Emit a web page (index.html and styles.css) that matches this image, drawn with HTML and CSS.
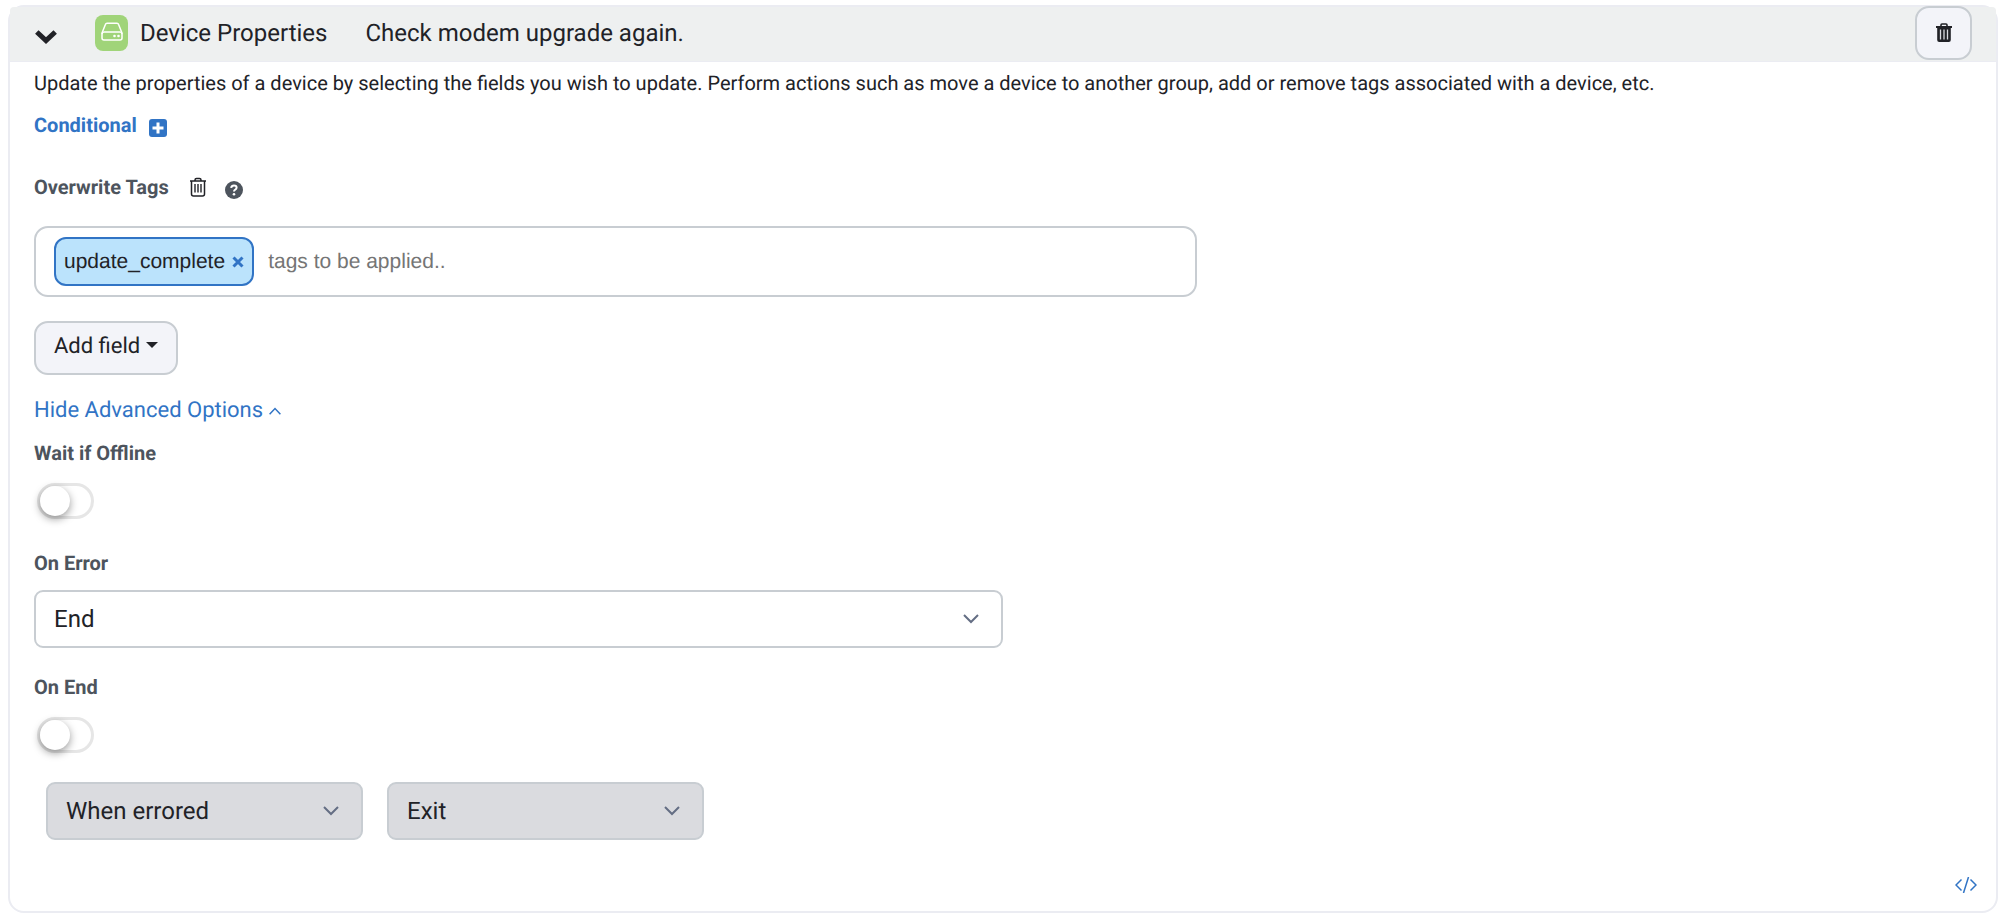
FILE: index.html
```html
<!DOCTYPE html>
<html lang="en">
<head>
<meta charset="utf-8">
<title>Device Properties</title>
<link rel="stylesheet" href="styles.css">
</head>
<body>
<main class="card">
  <header class="card-header">
    <button class="icon-button collapse" type="button" aria-label="Collapse">
      <svg width="24" height="18" viewBox="0 0 24 18"><path d="M2.800 4 12 12.600 21.200 4" fill="none" stroke="currentColor" stroke-width="5"/></svg>
    </button>
    <span class="device-icon">
      <svg width="22" height="20" viewBox="0 0 22 20" fill="none" stroke="#fff" stroke-width="1.500" stroke-linejoin="round"><path d="M1 11 4.500 2.300Q4.900 1.200 6 1.200H16Q17.100 1.200 17.500 2.300L21 11V16Q21 18 19 18H3Q1 18 1 16Z"/><path d="M1 12Q1.400 10 3 10H19Q20.600 10 21 12"/><circle cx="13.500" cy="14" r="1.300" fill="#fff" stroke="none"/><circle cx="17.500" cy="14" r="1.300" fill="#fff" stroke="none"/></svg>
    </span>
    <h1 class="title">Device Properties</h1>
    <span class="subtitle">Check modem upgrade again.</span>
    <button class="button delete" type="button" aria-label="Delete action">
      <svg width="18" height="20" viewBox="0 0 18 20"><path d="M6 3V2Q6 1 7 1H11Q12 1 12 2V3" fill="none" stroke="currentColor" stroke-width="1.600"/><path d="M1 3H17V5H15.800V17Q15.800 19 13.800 19H4.200Q2.200 19 2.200 17V5H1Z" fill="currentColor"/><path d="M5.500 6.500V16.500M9 6.500V16.500M12.500 6.500V16.500" stroke="#d9dadf" stroke-width="1.300"/></svg>
    </button>
  </header>
  <form class="card-body">
    <p class="description">Update the properties of a device by selecting the fields you wish to update. Perform actions such as move a device to another group, add or remove tags associated with a device, etc.</p>
    <button class="conditional" type="button">Conditional
      <svg width="18" height="18" viewBox="0 0 18 18"><rect width="18" height="18" rx="3" fill="currentColor"/><path d="M9 3.500V14.500M3.500 9H14.500" stroke="#fff" stroke-width="3"/></svg>
    </button>
    <div class="label-row">
      <label class="label" for="tags">Overwrite Tags</label>
      <button class="icon-button remove-field" type="button" aria-label="Remove field">
        <svg width="18" height="20" viewBox="0 0 18 20" fill="none" stroke="currentColor"><path d="M1 4H17M6 4V3Q6 1.500 7.500 1.500H10.500Q12 1.500 12 3V4M2.500 4V17Q2.500 19 4.500 19H13.500Q15.500 19 15.500 17V4" stroke-width="1.500"/><path d="M6 7V15.500M9 7V15.500M12 7V15.500" stroke-width="1.400"/></svg>
      </button>
      <button class="icon-button help" type="button" aria-label="Help">
        <svg width="18" height="18" viewBox="0 0 18 18"><circle cx="9" cy="9" r="9" fill="currentColor"/><path d="M6.100 6.900Q6.600 4.400 9 4.400Q11.600 4.400 11.600 6.600Q11.600 7.900 10.200 8.700Q9 9.300 9 10.600" fill="none" stroke="#fff" stroke-width="2"/><circle cx="9" cy="13.200" r="1.300" fill="#fff"/></svg>
      </button>
    </div>
    <div class="tags-field">
      <span class="tag">update_complete
        <button class="icon-button tag-remove" type="button" aria-label="Remove update_complete">
          <svg width="12" height="12" viewBox="0 0 12 12"><path d="M1.500 1.500 10.500 10.500M10.500 1.500 1.500 10.500" stroke="currentColor" stroke-width="3"/></svg>
        </button>
      </span>
      <input class="tags-input" id="tags" type="text" placeholder="tags to be applied..">
    </div>
    <button class="button add-field" type="button">Add field
      <svg width="12" height="6" viewBox="0 0 12 6"><path d="M0 0H12L6 6Z" fill="currentColor"/></svg>
    </button>
    <a class="advanced-link" href="#advanced">Hide Advanced Options
      <svg width="12" height="8" viewBox="0 0 12 8"><path d="M.600 7.200 6 1.500 11.400 7.200" fill="none" stroke="currentColor" stroke-width="1.500"/></svg>
    </a>
    <section class="advanced" id="advanced">
      <label class="label" for="wait">Wait if Offline</label>
      <input class="toggle" id="wait" type="checkbox">
      <label class="label" for="on-error">On Error</label>
      <div class="select-box half">
        <select class="select" id="on-error"><option>End</option></select>
        <svg class="chevron" width="16" height="10" viewBox="0 0 16 10"><path d="M1 1 8 8 15 1"/></svg>
      </div>
      <label class="label" for="on-end">On End</label>
      <input class="toggle" id="on-end" type="checkbox">
      <div class="end-options">
        <div class="select-box">
          <select class="select" aria-label="End condition" disabled><option>When errored</option></select>
          <svg class="chevron" width="16" height="10" viewBox="0 0 16 10"><path d="M1 1 8 8 15 1"/></svg>
        </div>
        <div class="select-box">
          <select class="select" aria-label="End behaviour" disabled><option>Exit</option></select>
          <svg class="chevron" width="16" height="10" viewBox="0 0 16 10"><path d="M1 1 8 8 15 1"/></svg>
        </div>
      </div>
    </section>
  </form>
  <footer class="card-footer">
    <button class="icon-button code" type="button" aria-label="View code">
      <svg width="22" height="16" viewBox="0 0 22 16" fill="none" stroke="currentColor" stroke-width="1.500"><path d="M6.500 2.500 1 8 6.500 13.500M15.500 2.500 21 8 15.500 13.500M13.500 0 8.500 16"/></svg>
    </button>
  </footer>
</main>
</body>
</html>
```
FILE: styles.css
```css
* {
  box-sizing: border-box;
}

body {
  margin: 0;
  padding: 5px 8px 9px;
  background: #fff;
  color: #212227;
  font-family: Roboto, "Liberation Sans", sans-serif;
  font-size: 20px;
  line-height: 30px;
  text-rendering: geometricPrecision;
}

button,
input,
select {
  font: inherit;
  color: inherit;
  text-rendering: inherit;
}

svg {
  display: block;
  flex: none;
}

.card {
  border: 2px solid #ebecf2;
  border-radius: 16px;
  background: #fff;
}

.card-header {
  display: flex;
  align-items: center;
  height: 55px;
  padding: 0 24px 2px;
  border-bottom: 1px solid #ebecf2;
  background: #eef0f0;
  border-radius: 4px 4px 0 0;
}

.icon-button {
  display: inline-flex;
  padding: 0;
  border: 0;
  background: none;
  cursor: pointer;
}

.collapse {
  margin-top: 8px;
}

.device-icon {
  display: flex;
  align-items: center;
  justify-content: center;
  width: 33px;
  height: 36px;
  margin-left: 37px;
  padding-bottom: 2px;
  border-radius: 8px;
  background: #a0d479;
}

.title,
.subtitle {
  margin: 0;
  font-size: 24px;
  font-weight: 400;
  line-height: 36px;
}

.title {
  margin-left: 12px;
}

.subtitle {
  margin-left: 38px;
}

.button {
  display: inline-flex;
  align-items: center;
  height: 54px;
  border: 2px solid #c8cdd2;
  border-radius: 14px;
  background: #f3f4f9;
  cursor: pointer;
}

.delete {
  justify-content: center;
  width: 57px;
  margin-left: auto;
  padding: 0;
}

.card-body {
  display: flex;
  flex-direction: column;
  align-items: flex-start;
  padding: 6px 24px 0;
}

.description {
  margin: 0;
}

.conditional {
  display: flex;
  align-items: center;
  gap: 12px;
  margin-top: 12px;
  padding: 0;
  border: 0;
  background: none;
  color: #3174c5;
  font-weight: 700;
  cursor: pointer;
}

.conditional svg {
  margin-top: 6px;
}

.label-row {
  display: flex;
  align-items: center;
  margin-top: 32px;
}

.label {
  color: #4d545d;
  font-weight: 700;
}

.remove-field {
  margin-left: 20px;
}

.help {
  margin: 5px 0 0 18px;
  color: #4d545d;
}

.tags-field {
  display: flex;
  align-items: center;
  gap: 12px;
  width: 60%;
  height: 71px;
  margin-top: 24px;
  padding: 0 18px;
  border: 2px solid #c8cdd2;
  border-radius: 14px;
  font-family: "Liberation Sans", Arial, sans-serif;
  font-size: 21px;
}

.tag {
  display: flex;
  align-items: center;
  gap: 7px;
  height: 49px;
  padding: 0 8px;
  border: 2px solid #3174c5;
  border-radius: 12px;
  background: #bbe3fc;
}

.tag-remove {
  color: #3174c5;
}

.tags-input {
  flex: 1;
  min-width: 0;
  padding: 2px;
  border: 0;
  outline: 0;
  background: none;
}

.tags-input::placeholder {
  color: #757575;
}

.add-field {
  gap: 6px;
  margin-top: 24px;
  padding: 0 18px 2px;
  font-size: 22px;
}

.add-field svg {
  margin-bottom: 4px;
}

.advanced-link {
  display: flex;
  align-items: center;
  gap: 6px;
  margin-top: 21px;
  color: #3174c5;
  font-size: 22px;
  text-decoration: none;
}

.advanced {
  display: flex;
  flex-direction: column;
  align-items: flex-start;
  width: 100%;
  margin-top: 12px;
}

.toggle {
  appearance: none;
  width: 57px;
  height: 36px;
  margin: 15px 3px 29px;
  border: 3px solid #e6e6e6;
  border-radius: 18px;
  background: #fff;
  cursor: pointer;
}

.toggle::before {
  content: "";
  display: block;
  width: 30px;
  height: 30px;
  border-radius: 50%;
  background: #fff;
  box-shadow: 0 3px 8px rgba(0, 0, 0, 0.4);
}

.select-box {
  display: grid;
  align-items: center;
  width: 317px;
}

.half {
  width: 50%;
  margin: 12px 0 24px;
}

.select,
.chevron {
  grid-area: 1 / 1;
}

.select {
  appearance: none;
  width: 100%;
  height: 58px;
  padding: 0 60px 0 18px;
  border: 2px solid #c8cdd2;
  border-radius: 9px;
  background: #fff;
  font-size: 24px;
}

.select:disabled {
  background: #dadbdf;
  color: #212227;
  opacity: 1;
}

.chevron {
  justify-self: end;
  margin-right: 24px;
  fill: none;
  stroke: #646e84;
  stroke-width: 2;
  pointer-events: none;
}

.end-options {
  display: flex;
  gap: 24px;
  padding-left: 12px;
}

.card-footer {
  display: flex;
  justify-content: flex-end;
  padding: 37px 19px 18px;
}

.code {
  color: #3174c5;
}
```
